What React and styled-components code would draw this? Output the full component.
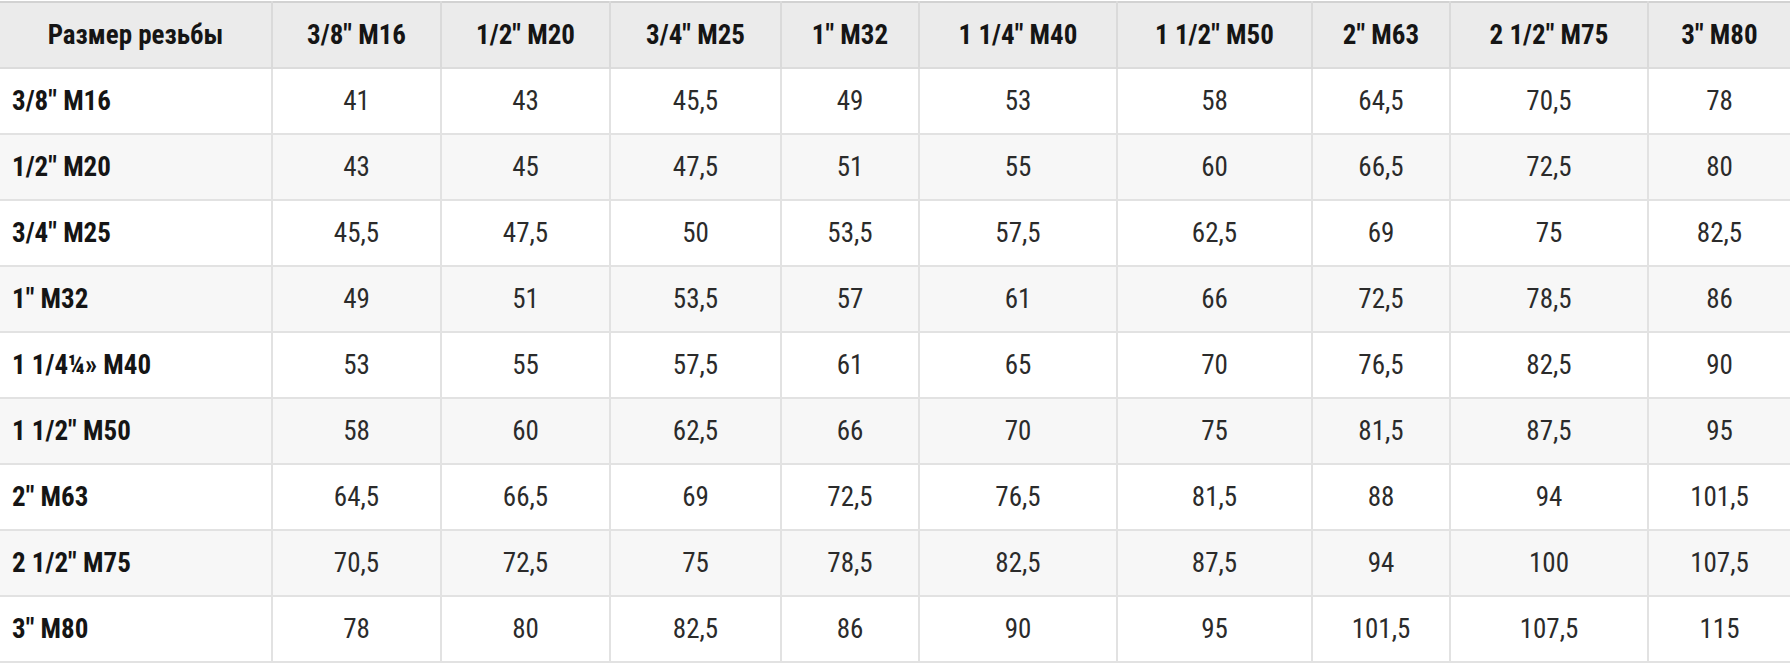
import styled, { createGlobalStyle } from 'styled-components';

const GlobalStyle = createGlobalStyle`
  body {
    margin: 0;
    padding-top: 1px;
    background: #fff;
    font-family: Roboto, 'Liberation Sans', sans-serif;
  }
`;

const columns = ['3/8" M16', '1/2" M20', '3/4" M25', '1" M32', '1 1/4" M40', '1 1/2" M50', '2" M63', '2 1/2" M75', '3" M80'];
const widths = [272, 169, 169, 171, 138, 198, 195, 138, 198, 142];

const rows = [
  ['3/8" M16', '41', '43', '45,5', '49', '53', '58', '64,5', '70,5', '78'],
  ['1/2" M20', '43', '45', '47,5', '51', '55', '60', '66,5', '72,5', '80'],
  ['3/4" M25', '45,5', '47,5', '50', '53,5', '57,5', '62,5', '69', '75', '82,5'],
  ['1" M32', '49', '51', '53,5', '57', '61', '66', '72,5', '78,5', '86'],
  ['1 1/4¼» M40', '53', '55', '57,5', '61', '65', '70', '76,5', '82,5', '90'],
  ['1 1/2" M50', '58', '60', '62,5', '66', '70', '75', '81,5', '87,5', '95'],
  ['2" M63', '64,5', '66,5', '69', '72,5', '76,5', '81,5', '88', '94', '101,5'],
  ['2 1/2" M75', '70,5', '72,5', '75', '78,5', '82,5', '87,5', '94', '100', '107,5'],
  ['3" M80', '78', '80', '82,5', '86', '90', '95', '101,5', '107,5', '115'],
];

const Table = styled.table`
  width: 1790px;
  table-layout: fixed;
  border-collapse: collapse;
  border-top: 2px solid #d2d2d2;
  font-stretch: 80%;
  font-size: 27px;
  color: #2b2b2b;
`;

const Row = styled.tr`
  height: 66px;
  background: ${(p) => (p.$striped ? '#f7f7f7' : '#fff')};
  border-bottom: 2px solid #e2e2e2;
`;

const HeadRow = styled.tr`
  height: 66px;
  background: #ebebeb;
  border-bottom: 2px solid #dcdcdc;
`;

const HeadCell = styled.th`
  font-weight: 700;
  color: #151515;
  text-align: center;
  padding: 0 6px;
  border-left: 2px solid #dadada;
  white-space: nowrap;

  &:first-child {
    border-left: none;
  }
`;

const Cell = styled.td`
  text-align: ${(p) => (p.$label ? 'left' : 'center')};
  font-weight: ${(p) => (p.$label ? 700 : 400)};
  color: ${(p) => (p.$label ? '#151515' : '#2b2b2b')};
  padding: 0 ${(p) => (p.$label ? '12px' : '6px')};
  border-left: 2px solid #e2e2e2;
  white-space: nowrap;

  &:first-child {
    border-left: none;
  }
`;

function App() {
  return (
    <>
      <GlobalStyle />
      <Table>
        <colgroup>
          {widths.map((w, i) => (
            <col key={i} style={{ width: w }} />
          ))}
        </colgroup>
        <thead>
          <HeadRow>
            <HeadCell>Размер резьбы</HeadCell>
            {columns.map((c) => (
              <HeadCell key={c}>{c}</HeadCell>
            ))}
          </HeadRow>
        </thead>
        <tbody>
          {rows.map((r, i) => (
            <Row key={r[0]} $striped={i % 2 === 1}>
              {r.map((v, j) => (
                <Cell key={j} $label={j === 0}>
                  {v}
                </Cell>
              ))}
            </Row>
          ))}
        </tbody>
      </Table>
    </>
  );
}

export default App;
